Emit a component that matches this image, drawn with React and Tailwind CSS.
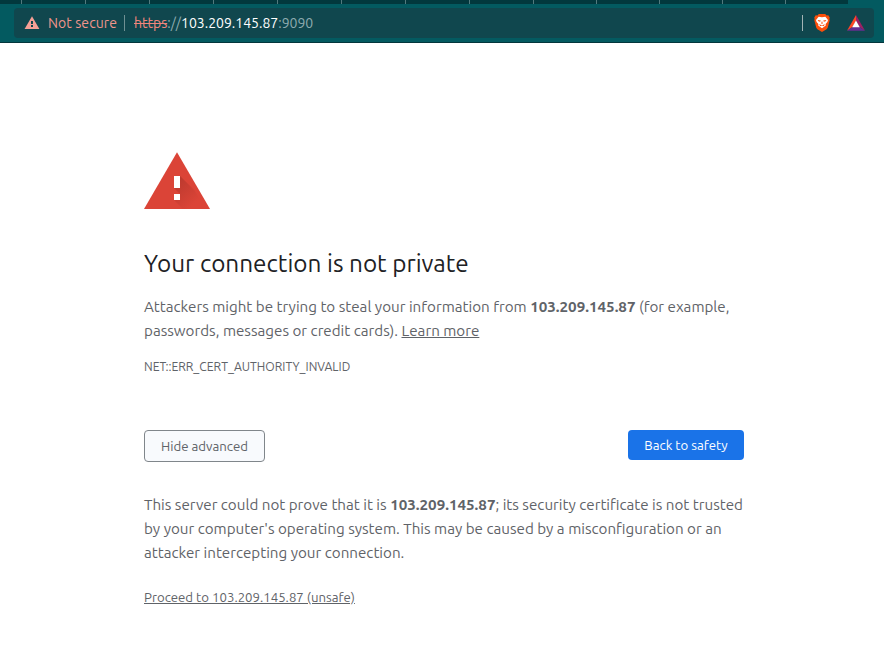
const TABS = [64, 64, 64, 64, 64, 64, 64, 64, 63, 63, 63, 63, 63];

function OmniboxWarning() {
  return (
    <svg width="16" height="14" viewBox="0 0 16 14" className="shrink-0">
      <path fill="#f6a096" d="M8 0.3 15.4 13H.6Z" />
      <path fill="#10474e" d="M7 5h2v3H7zM7 9h2v2H7z" />
    </svg>
  );
}

function BraveShield() {
  return (
    <svg width="16" height="18" viewBox="0 0 16 18" className="shrink-0">
      <path fill="#fb4f0b" d="M4.8 0h6.4l1.4 1.4 1.7-.1 1.5 2.4-.5 1.3.4 1.3-2 7.5-1.1 1.5L8 18l-4.6-2.7-1.1-1.5-2-7.5.4-1.3L.2 3.7l1.5-2.4 1.7.1Z" />
      <path fill="#fff" d="M4.6 2.8 8 3.3l3.4-.5L14 6l-.6 2-1.8 2.1.2 1.3L8 14.2l-3.8-2.8.2-1.3L2.6 8 2 6Z" />
      <path fill="#fb4f0b" d="m3.6 6 3.2.5-.7 1.2-1.7-.4ZM12.4 6l-3.2.5.7 1.2 1.7-.4ZM7.7 7.6h.6l.4 1.8-.7.5-.7-.5ZM5 10.2l3 1 3-1-1.4 2L8 11.5l-1.6.7Z" />
    </svg>
  );
}

function BatTriangle() {
  return (
    <svg width="18" height="16" viewBox="0 0 18 16" className="shrink-0">
      <path fill="#ff4724" d="M9 0v6L5.5 12 0 15.7Z" />
      <path fill="#9e1f63" d="M9 0v6l3.5 6 5.5 3.7Z" />
      <path fill="#662d91" d="M0 15.7 5.5 12h7l5.5 3.7Z" />
      <path fill="#fff" d="m9 5.6 3.8 6.6H5.2Z" />
    </svg>
  );
}

function WarningTriangle() {
  return (
    <svg width="66" height="58" viewBox="0 0 66 58" className="block">
      <defs>
        <linearGradient id="shade" x1="34" y1="26" x2="54" y2="48" gradientUnits="userSpaceOnUse">
          <stop offset="0" stopColor="#bb392e" />
          <stop offset="1" stopColor="#db4437" />
        </linearGradient>
      </defs>
      <path fill="#db4437" d="M33 0.3 66 57H0Z" />
      <path fill="url(#shade)" d="M36 24 50.6 38.6 61.3 57H39L30 48h6v-6l-6-6h6Z" />
      <path fill="#fff" d="M30 24h6v12h-6zM30 42h6v6h-6z" />
    </svg>
  );
}

export default function App() {
  return (
    <div className="flex h-[662px] w-[884px] flex-col overflow-hidden bg-white font-['Ubuntu','Noto_Sans',sans-serif] text-[#5f6368]">
      <header className="h-[43px] shrink-0 border-b border-[#03363c] bg-[#035a60]">
        <div className="flex h-1 w-[848px] bg-[#02383d] pl-[21px]">
          {TABS.map((w, i) => (
            <i key={i} className="h-1 shrink-0 border-l border-[#527a7e]" style={{ width: w }} />
          ))}
        </div>
        <div className="mt-1 mr-2.5 ml-3.5 flex h-[30px] items-center rounded bg-[#10474e] pl-2.5 text-[14px] leading-[30px] whitespace-nowrap">
          <OmniboxWarning />
          <span className="ml-2 w-[76px] tracking-[0.08px] text-[#f0958c]">Not secure</span>
          <i className="h-4 w-px bg-[#6f9093]" />
          <span className="ml-[9px] text-[#8eabae]">
            <span className="text-[#f0857c] line-through">https</span>://<span className="text-white">103.209.145.87</span>:9090
          </span>
          <i className="ml-auto h-4 w-px bg-[#a3b3b5]" />
          <div className="ml-[11px] flex w-[60px] items-center gap-[17px]">
            <BraveShield />
            <BatTriangle />
          </div>
        </div>
      </header>

      <main className="ml-36 w-[600px] pt-[109px] text-[15.18px] leading-6 whitespace-nowrap">
        <WarningTriangle />
        <h1 className="mt-[37px] text-[24.32px] leading-8 text-[#202124]">Your connection is not private</h1>
        <p className="mt-4">
          <span className="block">Attackers might be trying to steal your information from <b>103.209.145.87</b> (for example,</span>
          <span className="block">passwords, messages or credit cards). <a className="underline">Learn more</a></span>
        </p>
        <p className="mt-3 text-[12.16px]">NET::ERR_CERT_AUTHORITY_INVALID</p>
        <div className="mt-[51px] flex items-start justify-between text-[13.22px]">
          <button className="h-8 w-[121px] rounded border border-[#80868b] bg-[#f8fafd]">Hide advanced</button>
          <button className="h-[30px] w-[116px] rounded bg-[#1a73e8] text-white">Back to safety</button>
        </div>
        <p className="mt-[31px]">
          <span className="block">This server could not prove that it is <b>103.209.145.87</b>; its security certificate is not trusted</span>
          <span className="block">by your computer's operating system. This may be caused by a misconfiguration or an</span>
          <span className="block">attacker intercepting your connection.</span>
        </p>
        <p className="mt-5 text-[13.22px]"><a className="underline">Proceed to 103.209.145.87 (unsafe)</a></p>
      </main>
    </div>
  );
}
